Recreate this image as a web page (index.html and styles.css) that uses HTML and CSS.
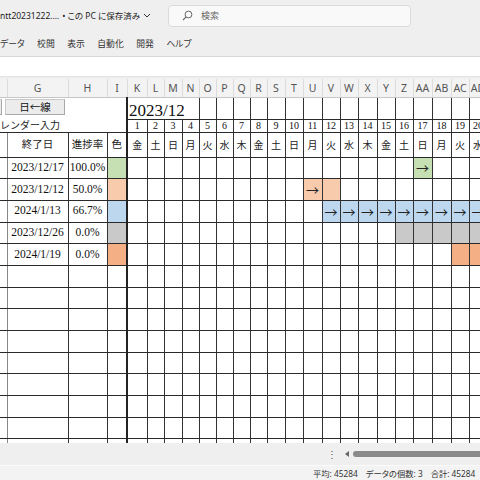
FILE: index.html
```html
<!DOCTYPE html>
<html lang="ja">
<head>
<meta charset="utf-8">
<title>Excel</title>
<link rel="stylesheet" href="styles.css">
</head>
<body>
<div class="app">
  <header class="titlebar">
    <div class="doc-title">ntt20231222.… <span class="dot">•</span> この PC に保存済み <svg class="chev" width="8" height="5" viewBox="0 0 8 5"><path d="M1 1l3 3 3-3" fill="none" stroke="#333" stroke-width="1"/></svg></div>
    <div class="search"><svg width="11" height="11" viewBox="0 0 11 11"><circle cx="6.5" cy="4.5" r="3.4" fill="none" stroke="#666" stroke-width="1"/><path d="M4.1 6.9L1 10" stroke="#666" stroke-width="1.1"/></svg><span>検索</span></div>
  </header>
  <nav class="menubar"><span>データ</span><span>校閲</span><span>表示</span><span>自動化</span><span>開発</span><span>ヘルプ</span></nav>
  <div class="formulabar"></div>
  <div class="sheet">
    <table class="grid">
      <colgroup>
        <col class="w7"><col class="w61"><col class="w39"><col class="w20">
        <col class="w20"><col class="w17"><col class="w18"><col class="w17"><col class="w17"><col class="w17"><col class="w17"><col class="w17"><col class="w18"><col class="w18">
        <col class="w19"><col class="w18"><col class="w18"><col class="w19"><col class="w18"><col class="w18"><col class="w19"><col class="w19"><col class="w18"><col class="w18">
      </colgroup>
      <thead>
        <tr class="rh"><th></th><th>G</th><th>H</th><th>I</th><th>K</th><th>L</th><th>M</th><th>N</th><th>O</th><th>P</th><th>Q</th><th>R</th><th>S</th><th>T</th><th>U</th><th>V</th><th>W</th><th>X</th><th>Y</th><th>Z</th><th>AA</th><th>AB</th><th>AC</th><th>AD</th></tr>
      </thead>
      <tbody>
        <tr class="ra"><td class="nb"></td><td class="nb"></td><td class="nb"></td><td class="nb"></td><td class="ym" colspan="4">2023/12</td><td></td><td></td><td></td><td></td><td></td><td></td><td></td><td></td><td></td><td></td><td></td><td></td><td></td><td></td><td></td><td></td></tr>
        <tr class="rb"><td class="nbr lbl">レンダー入力</td><td class="nbr"></td><td class="nbr"></td><td></td><td class="dn">1</td><td class="dn">2</td><td class="dn">3</td><td class="dn">4</td><td class="dn">5</td><td class="dn">6</td><td class="dn">7</td><td class="dn">8</td><td class="dn">9</td><td class="dn">10</td><td class="dn">11</td><td class="dn">12</td><td class="dn">13</td><td class="dn">14</td><td class="dn">15</td><td class="dn">16</td><td class="dn">17</td><td class="dn">18</td><td class="dn">19</td><td class="dn">20</td></tr>
        <tr class="rc"><td class="fcol"></td><td class="hd">終了日</td><td class="hd">進捗率</td><td class="hd">色</td><td class="wd">金</td><td class="wd">土</td><td class="wd">日</td><td class="wd">月</td><td class="wd">火</td><td class="wd">水</td><td class="wd">木</td><td class="wd">金</td><td class="wd">土</td><td class="wd">日</td><td class="wd">月</td><td class="wd">火</td><td class="wd">水</td><td class="wd">木</td><td class="wd">金</td><td class="wd">土</td><td class="wd">日</td><td class="wd">月</td><td class="wd">火</td><td class="wd">水</td></tr>
        <tr class="rd"><td class="fcol"></td><td>2023/12/17</td><td>100.0%</td><td class="green"></td><td></td><td></td><td></td><td></td><td></td><td></td><td></td><td></td><td></td><td></td><td></td><td></td><td></td><td></td><td></td><td></td><td class="green ar">→</td><td></td><td></td><td></td></tr>
        <tr class="rd"><td class="fcol"></td><td>2023/12/12</td><td>50.0%</td><td class="peach"></td><td></td><td></td><td></td><td></td><td></td><td></td><td></td><td></td><td></td><td></td><td class="peach ar">→</td><td class="peach"></td><td></td><td></td><td></td><td></td><td></td><td></td><td></td><td></td></tr>
        <tr class="rd"><td class="fcol"></td><td>2024/1/13</td><td>66.7%</td><td class="blue"></td><td></td><td></td><td></td><td></td><td></td><td></td><td></td><td></td><td></td><td></td><td></td><td class="blue ar">→</td><td class="blue ar">→</td><td class="blue ar">→</td><td class="blue ar">→</td><td class="blue ar">→</td><td class="blue ar">→</td><td class="blue ar">→</td><td class="blue ar">→</td><td class="blue ar">→</td></tr>
        <tr class="rd"><td class="fcol"></td><td>2023/12/26</td><td>0.0%</td><td class="gray"></td><td></td><td></td><td></td><td></td><td></td><td></td><td></td><td></td><td></td><td></td><td></td><td></td><td></td><td></td><td></td><td class="gray"></td><td class="gray"></td><td class="gray"></td><td class="gray"></td><td class="gray"></td></tr>
        <tr class="rd"><td class="fcol"></td><td>2024/1/19</td><td>0.0%</td><td class="orange"></td><td></td><td></td><td></td><td></td><td></td><td></td><td></td><td></td><td></td><td></td><td></td><td></td><td></td><td></td><td></td><td></td><td></td><td></td><td class="orange"></td><td class="orange"></td></tr>
        <tr class="rd"><td class="fcol"></td><td></td><td></td><td></td><td></td><td></td><td></td><td></td><td></td><td></td><td></td><td></td><td></td><td></td><td></td><td></td><td></td><td></td><td></td><td></td><td></td><td></td><td></td><td></td></tr>
        <tr class="rd"><td class="fcol"></td><td></td><td></td><td></td><td></td><td></td><td></td><td></td><td></td><td></td><td></td><td></td><td></td><td></td><td></td><td></td><td></td><td></td><td></td><td></td><td></td><td></td><td></td><td></td></tr>
        <tr class="rd"><td class="fcol"></td><td></td><td></td><td></td><td></td><td></td><td></td><td></td><td></td><td></td><td></td><td></td><td></td><td></td><td></td><td></td><td></td><td></td><td></td><td></td><td></td><td></td><td></td><td></td></tr>
        <tr class="rd"><td class="fcol"></td><td></td><td></td><td></td><td></td><td></td><td></td><td></td><td></td><td></td><td></td><td></td><td></td><td></td><td></td><td></td><td></td><td></td><td></td><td></td><td></td><td></td><td></td><td></td></tr>
        <tr class="rd"><td class="fcol"></td><td></td><td></td><td></td><td></td><td></td><td></td><td></td><td></td><td></td><td></td><td></td><td></td><td></td><td></td><td></td><td></td><td></td><td></td><td></td><td></td><td></td><td></td><td></td></tr>
        <tr class="rd"><td class="fcol"></td><td></td><td></td><td></td><td></td><td></td><td></td><td></td><td></td><td></td><td></td><td></td><td></td><td></td><td></td><td></td><td></td><td></td><td></td><td></td><td></td><td></td><td></td><td></td></tr>
        <tr class="rd"><td class="fcol"></td><td></td><td></td><td></td><td></td><td></td><td></td><td></td><td></td><td></td><td></td><td></td><td></td><td></td><td></td><td></td><td></td><td></td><td></td><td></td><td></td><td></td><td></td><td></td></tr>
        <tr class="rd"><td class="fcol"></td><td></td><td></td><td></td><td></td><td></td><td></td><td></td><td></td><td></td><td></td><td></td><td></td><td></td><td></td><td></td><td></td><td></td><td></td><td></td><td></td><td></td><td></td><td></td></tr>
        <tr class="rd"><td class="fcol"></td><td></td><td></td><td></td><td></td><td></td><td></td><td></td><td></td><td></td><td></td><td></td><td></td><td></td><td></td><td></td><td></td><td></td><td></td><td></td><td></td><td></td><td></td><td></td></tr>
        <tr class="rd"><td class="fcol"></td><td></td><td></td><td></td><td></td><td></td><td></td><td></td><td></td><td></td><td></td><td></td><td></td><td></td><td></td><td></td><td></td><td></td><td></td><td></td><td></td><td></td><td></td><td></td></tr>
      </tbody>
    </table>
    <button class="fbtn fbtn-prev" type="button"></button>
    <button class="fbtn fbtn-line" type="button">日←線</button>
  </div>
  <div class="hscroll"><span class="grip">⋮</span><span class="tri"></span><span class="thumb"></span></div>
  <footer class="status"><span>平均: 45284</span><span>データの個数: 3</span><span>合計: 45284</span></footer>
</div>
</body>
</html>
```
FILE: styles.css
```css
* { box-sizing: border-box; }
html, body { margin: 0; padding: 0; }
body {
  width: 480px;
  height: 480px;
  overflow: hidden;
  background: #efefef;
  color: #222;
  font-family: "Noto Sans", "Noto Sans CJK JP", sans-serif;
}
.app { width: 480px; height: 480px; display: flex; flex-direction: column; overflow: hidden; }

.titlebar { height: 30px; display: flex; align-items: center; flex: none; }
.doc-title {
  width: 168px;
  font-size: 8.5px;
  white-space: nowrap;
  display: flex;
  align-items: center;
  gap: 2px;
  font-family: "Noto Sans", "Noto Sans CJK JP", sans-serif;
  font-feature-settings: "palt";
}
.doc-title .dot { margin-left: 1px; }
.chev { margin-left: 1px; }
.search {
  width: 243px;
  height: 22px;
  margin-top: 1px;
  background: #f9f9f9;
  border: 1px solid #dadada;
  border-radius: 4px;
  display: flex;
  align-items: center;
  padding-left: 13px;
  gap: 8px;
  font-size: 9px;
  color: #666;
  font-family: "Noto Sans CJK JP", sans-serif;
}

.menubar {
  height: 26px;
  flex: none;
  display: flex;
  align-items: center;
  gap: 12.5px;
  font-size: 8.8px;
  color: #333;
  font-family: "Noto Sans CJK JP", sans-serif;
  font-feature-settings: "palt";
}

.formulabar {
  height: 21px;
  flex: none;
  background: #fff;
  border-top: 1px solid #d8d8d8;
  border-bottom: 1px solid #e2e2e2;
  margin-bottom: 2px;
}

.sheet {
  height: 364px;
  flex: none;
  position: relative;
  overflow: hidden;
  background: #fff;
}
.grid {
  border-collapse: collapse;
  table-layout: fixed;
  width: 487px;
  font-family: "Liberation Serif", "Noto Sans CJK JP", serif;
  font-size: 11.5px;
  color: #111;
}
.w7 { width: 7px; }
.w61 { width: 61px; }
.w39 { width: 39px; }
.w20 { width: 20px; }
.w17 { width: 17px; }
.w18 { width: 18px; }
.w19 { width: 19px; }

.grid th {
  height: 18px;
  padding: 0;
  background: #f3f3f3;
  color: #555;
  font-family: "Noto Sans", sans-serif;
  font-weight: normal;
  font-size: 10.5px;
  border-right: 1px solid #dcdcdc;
  border-bottom: 1px solid #c6c6c6;
  text-align: center;
  overflow: hidden;
  white-space: nowrap;
}
.grid td {
  padding: 0;
  border-right: 1px solid #333;
  border-bottom: 1px solid #2a2a2a;
  text-align: center;
  line-height: 1;
  white-space: nowrap;
  overflow: visible;
}
.grid tbody td:nth-child(4) { border-right: 2px solid #222; }

.ra { height: 22px; }
.rb { height: 13px; }
.rc { height: 25px; }
.rd { height: 21.7px; }

.grid td.nb { border-right: none; border-bottom: none; }
.grid td.nbr { border-right: none; }
.grid td.fcol { border-right-color: #888; }

.grid td.ym {
  text-align: left;
  vertical-align: bottom;
  font-size: 17px;
  line-height: 16px;
  padding: 0 0 0 1px;
}
.lbl {
  text-align: left;
  font-family: "Noto Sans CJK JP", sans-serif;
  font-size: 10px;
  color: #222;
}
.dn { font-size: 10px; }
.wd, .hd {
  font-family: "Noto Sans CJK JP", sans-serif;
  font-size: 10px;
  color: #222;
}
.hd { font-size: 10.5px; }
.ar {
  font-family: "Noto Sans CJK JP", sans-serif;
  font-size: 13px;
  color: #222;
}

.green { background: #c6e0b4; }
.peach { background: #f8cbad; }
.blue { background: #bdd7ee; }
.gray { background: #c9c9c9; }
.orange { background: #f4b084; }

.fbtn {
  position: absolute;
  top: 20px;
  height: 16px;
  width: 60px;
  padding: 0;
  margin: 0;
  background: #ececec;
  border: 1px solid #c9c9c9;
  border-right-color: #a8a8a8;
  border-bottom-color: #a8a8a8;
  font-family: "Noto Sans CJK JP", sans-serif;
  font-size: 10.5px;
  line-height: 14px;
  color: #111;
}
.fbtn-line { left: 5px; }
.fbtn-prev { left: -58px; }

.hscroll {
  height: 22px;
  flex: none;
  display: flex;
  align-items: center;
  background: #efefef;
}
.grip { margin-left: 327px; font-size: 10px; color: #555; width: 12px; }
.tri {
  margin-left: 6px;
  width: 0;
  height: 0;
  border-top: 3px solid transparent;
  border-bottom: 3px solid transparent;
  border-right: 4px solid #666;
}
.thumb {
  margin-left: 4px;
  flex: 1;
  height: 6px;
  margin-right: -10px;
  border-radius: 3px;
  background: #8a8a8a;
}

.status {
  height: 15px;
  flex: none;
  display: flex;
  align-items: center;
  gap: 8px;
  padding-left: 313px;
  background: #f3f3f3;
  border-top: 1px solid #fafafa;
  font-family: "Noto Sans", "Noto Sans CJK JP", sans-serif;
  font-feature-settings: "palt";
  font-size: 8.3px;
  color: #333;
  white-space: nowrap;
}
```
